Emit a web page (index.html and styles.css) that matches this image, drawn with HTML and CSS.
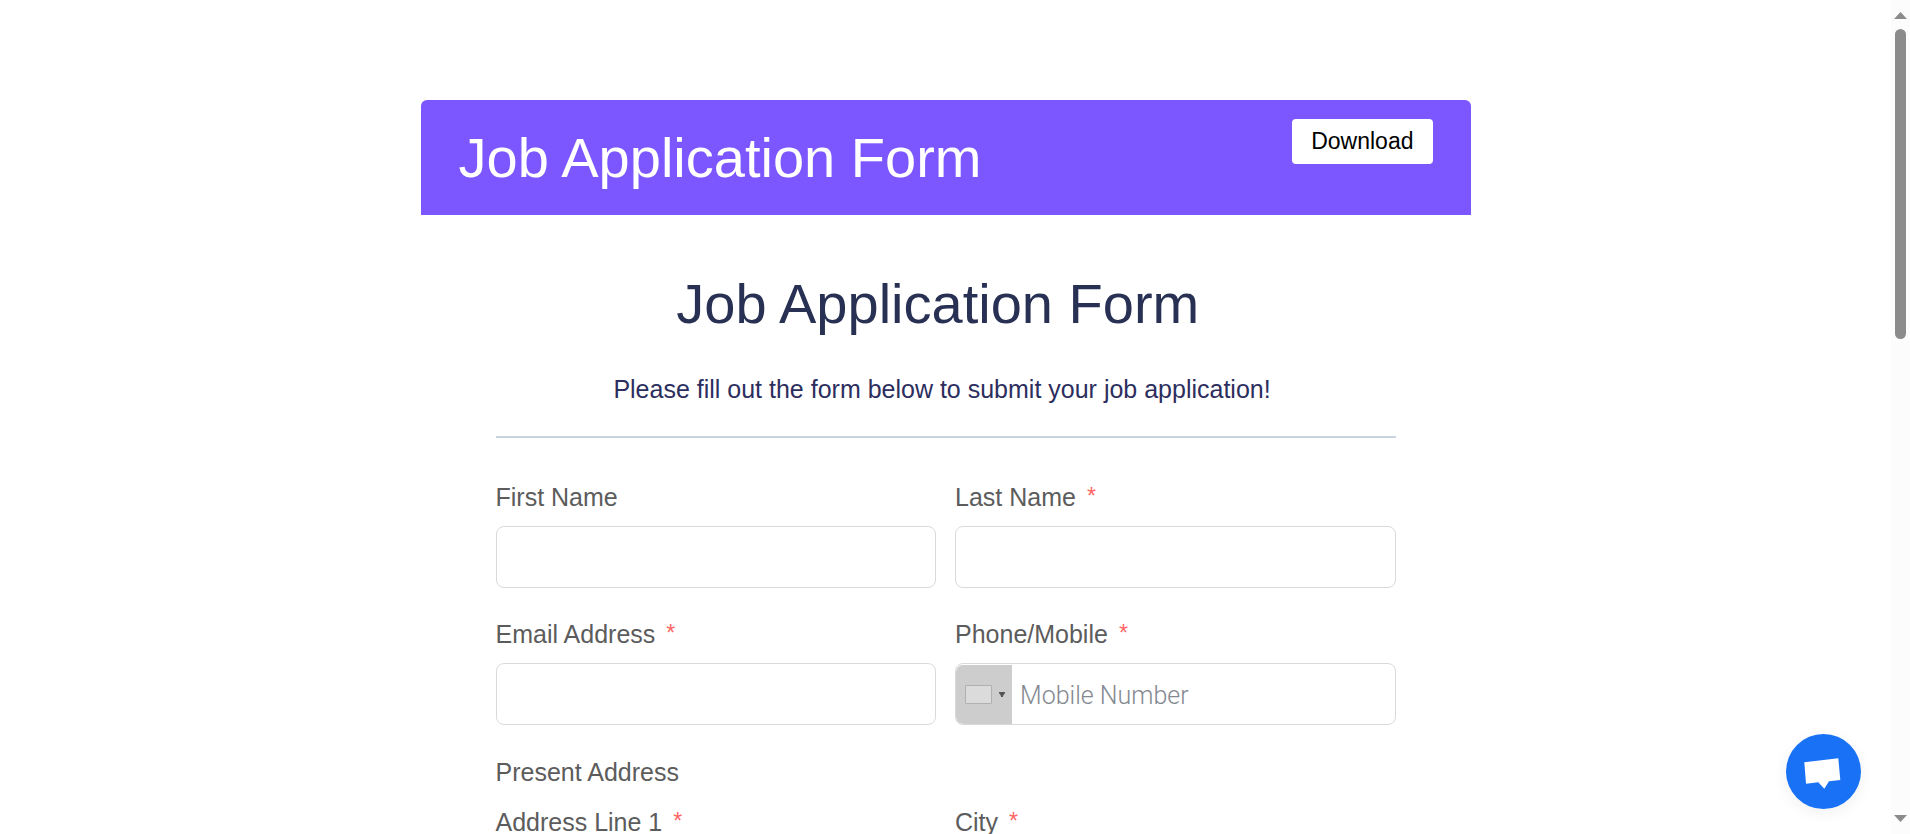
FILE: index.html
```html
<!DOCTYPE html>
<html lang="en">
<head>
<meta charset="utf-8">
<title>Job Application Form</title>
<link rel="stylesheet" href="styles.css">
</head>
<body>
<div class="window">
  <main class="page">
    <header class="banner">
      <h1 class="title">Job Application Form</h1>
      <button class="download" type="button">Download</button>
    </header>
    <form class="form">
      <h2 class="title title-form">Job Application Form&nbsp;</h2>
      <p class="intro">Please fill out the form below to submit your job application!&nbsp;</p>
      <hr class="rule">
      <div class="fields">
        <div class="field">
          <label class="label" for="first">First Name</label>
          <input class="input" id="first" type="text">
        </div>
        <div class="field">
          <label class="label" for="last">Last Name<span class="required">*</span></label>
          <input class="input" id="last" type="text">
        </div>
        <div class="field">
          <label class="label" for="email">Email Address<span class="required">*</span></label>
          <input class="input" id="email" type="email">
        </div>
        <div class="field">
          <label class="label" for="phone">Phone/Mobile<span class="required">*</span></label>
          <div class="phone">
            <button class="country" type="button" aria-label="Select country">
              <span class="flag"></span>
              <svg class="caret" viewBox="0 0 6 5" aria-hidden="true"><path d="M0 0h6v1L4 4v1H2V4L0 1z"/></svg>
            </button>
            <input class="phone-input" id="phone" type="tel" placeholder="Mobile Number">
          </div>
        </div>
      </div>
      <fieldset class="group">
        <legend class="label legend">Present Address</legend>
        <div class="fields">
          <div class="field">
            <label class="label" for="line1">Address Line 1<span class="required">*</span></label>
            <input class="input" id="line1" type="text">
          </div>
          <div class="field">
            <label class="label" for="city">City<span class="required">*</span></label>
            <input class="input" id="city" type="text">
          </div>
        </div>
      </fieldset>
    </form>
  </main>
  <div class="scrollbar" aria-hidden="true">
    <svg class="arrow" viewBox="0 0 13 7"><path d="M6.500 0L13 7H0z"/></svg>
    <div class="track"><div class="thumb"></div></div>
    <svg class="arrow" viewBox="0 0 13 7"><path d="M0 0h13L6.500 7z"/></svg>
  </div>
</div>
<button class="chat" type="button" aria-label="Open chat">
  <svg class="chat-icon" viewBox="0 0 75 75" aria-hidden="true"><path d="M18.300 28.300L52.300 24.300L54.300 46L43 47.300L38.300 54.700L32.300 48.300L20 49.700z"/></svg>
</button>
</body>
</html>
```

FILE: styles.css
```css
* {
  box-sizing: border-box;
}

body {
  margin: 0;
  background: #fff;
  color: #5c5c5c;
  font-family: "Liberation Sans", Arial, sans-serif;
  font-size: 25px;
  line-height: 35px;
}

.window {
  display: flex;
  height: 100vh;
  overflow: hidden;
}

.page {
  flex: 1;
  padding: 100px 24px 0;
}

.banner,
.form {
  max-width: 1050px;
  margin: 0 auto;
}

.banner {
  display: flex;
  justify-content: space-between;
  align-items: flex-start;
  padding: 19px 38px 18px;
  border-radius: 6px 6px 0 0;
  background: #7c57ff;
  color: #fff;
}

.title {
  margin: 0;
  font-size: 56px;
  font-weight: 400;
  line-height: 78px;
}

.download {
  padding: 5px 19px;
  border: 0;
  border-radius: 4px;
  background: #fff;
  color: #000;
  font: inherit;
  font-size: 23px;
}

.form {
  padding: 50px 75px;
}

.title-form {
  color: #283053;
  text-align: center;
}

.intro {
  margin: 29px 0;
  color: #2c2e5e;
  text-align: center;
}

.rule {
  height: 2px;
  margin: 0 0 42px;
  border: 0;
  background: #c8d3df;
}

.fields {
  display: grid;
  grid-template-columns: 1fr 1fr;
  gap: 29px 19px;
}

.field {
  display: flex;
  flex-direction: column;
  gap: 11px;
}

.required {
  margin-left: 11px;
  color: #ff6666;
  font-size: 23px;
  line-height: 1;
  vertical-align: 2px;
}

.input,
.phone {
  width: 100%;
  height: 62px;
  border: 1px solid #d9d9d9;
  border-radius: 8px;
  background: #fff;
}

.input {
  padding: 0 12px;
  font: inherit;
}

.phone {
  display: flex;
  overflow: hidden;
}

.country {
  display: flex;
  align-items: center;
  gap: 7px;
  margin-top: 1px;
  padding: 0 7px 0 9px;
  border: 0;
  border-radius: 7px 0 0 7px;
  background: #cdcdcd;
}

.flag {
  width: 27px;
  height: 19px;
  border: 1px solid #b0b0b0;
  border-radius: 1px;
  background: #dbdbdb;
}

.caret {
  width: 6px;
  height: 5px;
  fill: #555;
}

.phone-input {
  flex: 1;
  min-width: 0;
  padding: 2px 8px 0;
  border: 0;
  background: transparent;
  font-family: Roboto, "Open Sans", sans-serif;
  font-size: 25px;
  font-weight: 300;
}

.phone-input::placeholder {
  color: #848991;
  opacity: 1;
}

.group {
  min-width: 0;
  margin: 30px 0 0;
  padding: 0;
  border: 0;
}

.legend {
  margin-bottom: 15px;
  padding: 0;
}

.scrollbar {
  display: flex;
  flex-direction: column;
  align-items: center;
  width: 19px;
  padding: 12px 0;
  background: #fcfcfc;
}

.arrow {
  width: 13px;
  height: 7px;
  fill: #8b8b8b;
}

.track {
  flex: 1;
  width: 11px;
  padding: 10px 0;
}

.thumb {
  height: 40%;
  border-radius: 6px;
  background: #8b8b8b;
}

.chat {
  position: fixed;
  right: 49px;
  bottom: 25px;
  width: 75px;
  height: 75px;
  padding: 0;
  border: 0;
  border-radius: 50%;
  background: #1972f5;
  box-shadow: 0 4px 16px rgba(0, 0, 0, 0.06);
}

.chat-icon {
  display: block;
  width: 75px;
  height: 75px;
  fill: #fff;
}
```
